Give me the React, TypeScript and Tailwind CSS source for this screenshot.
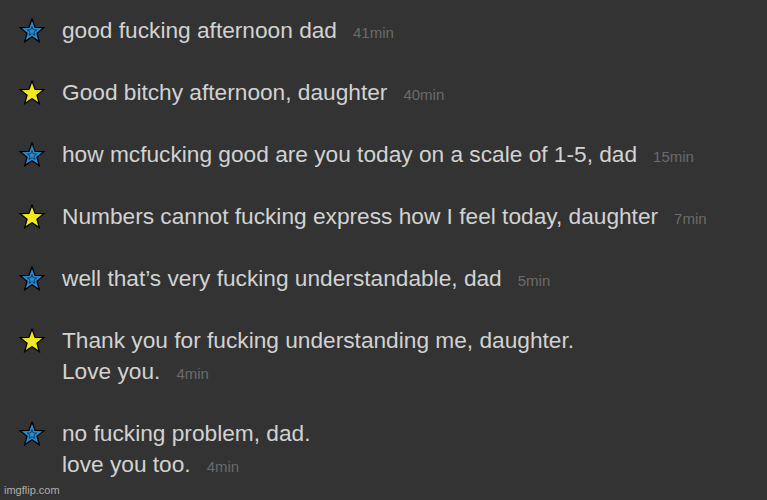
const OUTER =
  "12,1 14.82,8.62 22.94,8.95 16.57,13.98 18.76,21.8 12,17.3 5.24,21.8 7.43,13.98 1.06,8.95 9.18,8.62";
const INNER =
  "12,7.9 13.13,10.95 16.38,11.08 13.83,13.09 14.7,16.22 12,14.42 9.3,16.22 10.17,13.09 7.62,11.08 10.87,10.95";

const messages = [
  { from: "kid", lines: ["good fucking afternoon dad"], time: "41min" },
  { from: "dad", lines: ["Good bitchy afternoon, daughter"], time: "40min" },
  { from: "kid", lines: ["how mcfucking good are you today on a scale of 1-5, dad"], time: "15min" },
  { from: "dad", lines: ["Numbers cannot fucking express how I feel today, daughter"], time: "7min" },
  { from: "kid", lines: ["well that\u2019s very fucking understandable, dad"], time: "5min" },
  { from: "dad", lines: ["Thank you for fucking understanding me, daughter.", "Love you."], time: "4min" },
  { from: "kid", lines: ["no fucking problem, dad.", "love you too."], time: "4min" },
];

function Star({ blue }: { blue: boolean }) {
  return (
    <svg width="26" height="26" viewBox="0 0 24 24">
      <polygon
        points={OUTER}
        fill={blue ? "#2a8ed4" : "#f3e91f"}
        stroke="#000"
        strokeWidth="1.2"
        strokeLinejoin="miter"
      />
      {blue && <polygon points={INNER} fill="none" stroke="#0d2f4a" strokeWidth="0.8" />}
    </svg>
  );
}

export default function App() {
  return (
    <div className="relative w-[767px] h-[500px] bg-[#333333] overflow-hidden font-['Liberation_Sans',Arial,sans-serif]">
      <div className="flex flex-col gap-[31px] pt-[15px] pl-[19px]">
        {messages.map((m, i) => (
          <div key={i} className="flex items-start gap-[17px]">
            <div className="h-[31px] flex items-center">
              <Star blue={m.from === "kid"} />
            </div>
            <div className="text-[22.7px] leading-[31px] text-[#d2d2d2]">
              {m.lines.map((line, j) => (
                <div key={j} className="h-[31px] whitespace-nowrap">
                  {line}
                  {j === m.lines.length - 1 && (
                    <span className="ml-4 text-[15px] leading-none text-[#6b6b6b]">{m.time}</span>
                  )}
                </div>
              ))}
            </div>
          </div>
        ))}
      </div>
      <div className="absolute left-[4px] bottom-[4px] text-[11px] leading-none text-[#b0b0b0]">imgflip.com</div>
    </div>
  );
}
